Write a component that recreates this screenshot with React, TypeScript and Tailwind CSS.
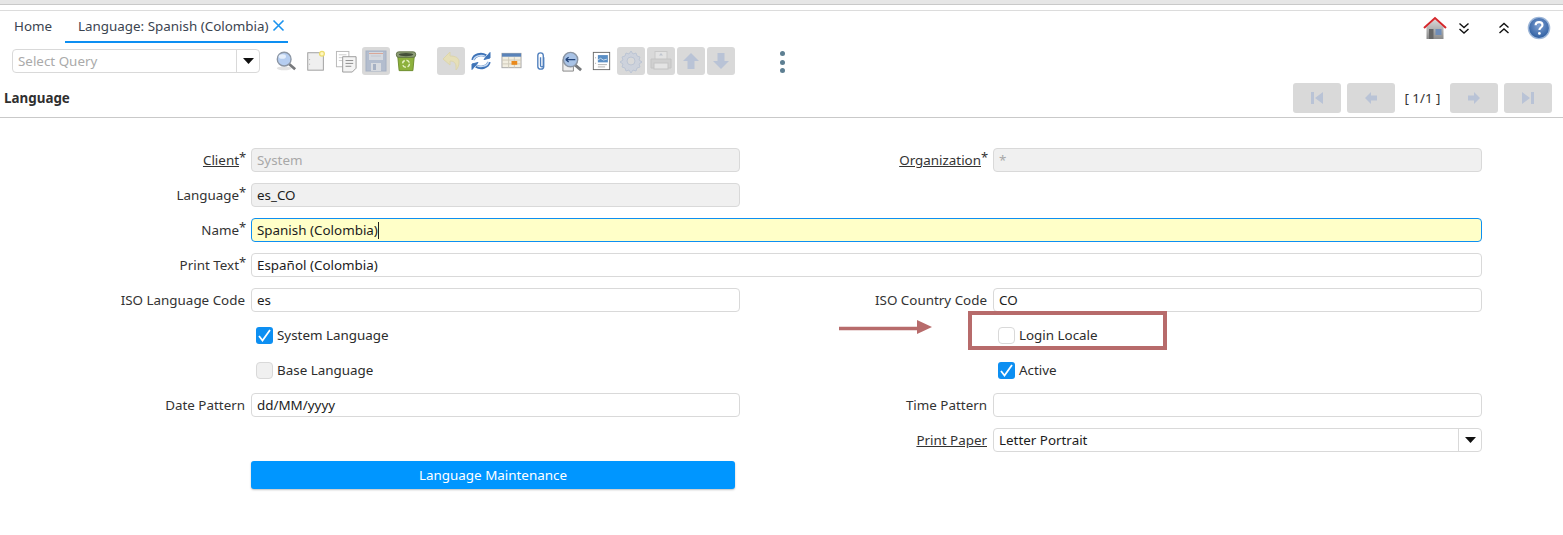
import React from 'react';

const font = 'font-["Noto_Sans",sans-serif]';
const labelCls = 'pt-[2px] text-[13.4px] text-[#333] text-right self-center leading-none whitespace-nowrap';
const fieldCls = 'h-6 border rounded-[4px] px-[5px] flex items-center text-[13.4px]';
const inputCls = `${fieldCls} border-[#d9d9d9] text-[#1c1c1c]`;

function Label({ text, req, link }: { text: string; req?: boolean; link?: boolean }) {
  return (
    <div className={labelCls}>
      <span className={link ? 'underline' : ''}>{text}</span>
      {req && <span className="relative inline-block w-[6px] h-[1px]"><span className="absolute left-0 -top-[13px] text-[13px]">*</span></span>}
    </div>
  );
}

function Check({ checked, disabled }: { checked?: boolean; disabled?: boolean }) {
  if (checked) {
    return (
      <span className="w-[17px] h-[17px] rounded-[3px] bg-[#0d8ff2] flex items-center justify-center">
        <svg width="15" height="15" viewBox="0 0 15 15" fill="none" stroke="#fff" strokeWidth="1.8"><path d="M2 8l3.5 4.5L13 2" /></svg>
      </span>
    );
  }
  return <span className={`w-[17px] h-[17px] rounded-[4px] border border-[#d9d9d9] ${disabled ? 'bg-[#f0f0f0]' : 'bg-white'}`} />;
}

function CheckRow({ text, checked, disabled }: { text: string; checked?: boolean; disabled?: boolean }) {
  return (
    <div className="flex items-center gap-[4px] pl-[5px] h-6 text-[13.4px] text-[#2c2c2c]">
      <Check checked={checked} disabled={disabled} />
      <span>{text}</span>
    </div>
  );
}

function Tool({ off, children }: { off?: boolean; children: React.ReactNode }) {
  return (
    <div className={`w-7 h-7 rounded-[3px] flex items-center justify-center ${off ? 'bg-[#d9d9d9]' : ''}`}>
      {children}
    </div>
  );
}

function Nav({ children }: { children: React.ReactNode }) {
  return <div className="w-12 h-[30px] rounded-[3px] bg-[#d9d9d9] flex items-center justify-center">{children}</div>;
}

const navIcon = '#b9c3d6';

export default function App() {
  return (
    <div className={`relative w-[1563px] h-[535px] overflow-hidden bg-white ${font}`}>
      <div className="h-[5px] bg-[#e6e6e6] border-b border-[#c9c9c9]" />
      <div className="mt-[5px] border-t border-[#dcdcdc]" />

      {/* tabs */}
      <div className="flex items-start h-[32px]">
        <div className="w-[65px] pl-[14px] pt-[5px] text-[13.4px] leading-5 text-[#3b4450]">Home</div>
        <div className="w-[223px] h-[32px] border-b-2 border-[#0d8ff2] pl-[13px] pt-[5px] text-[13.4px] leading-5 text-[#3b4450] flex gap-[3px] whitespace-nowrap">
          <span>Language: Spanish (Colombia)</span>
          <svg className="mt-[3px] shrink-0" width="13" height="13" viewBox="0 0 13 13" stroke="#1b93ee" strokeWidth="1.6"><path d="M1.5 1.5l10 10M11.5 1.5l-10 10" /></svg>
        </div>
        <div className="ml-auto flex items-center pt-[5px] pr-[12px]">
          <svg width="24" height="24" viewBox="0 0 24 24">
            <defs>
              <linearGradient id="houseBody" x1="0" y1="0" x2="0" y2="1"><stop offset="0" stopColor="#d8d8d8" /><stop offset="1" stopColor="#8a8a8a" /></linearGradient>
            </defs>
            <path d="M3.5 11v12h17V11L12 3.5z" fill="url(#houseBody)" />
            <path d="M1 12L12 2l11 10" fill="none" stroke="#d5282c" strokeWidth="2" />
            <rect x="6" y="13" width="4.5" height="10" fill="#666" />
            <rect x="12.5" y="13" width="6" height="6" fill="#6f8db8" />
          </svg>
          <svg className="ml-[10px]" width="14" height="14" viewBox="0 0 14 14" fill="none" stroke="#111" strokeWidth="1.4"><path d="M2.5 2.5L7 6.5l4.5-4M2.5 8L7 12l4.5-4" /></svg>
          <svg className="ml-[26px]" width="14" height="14" viewBox="0 0 14 14" fill="none" stroke="#111" strokeWidth="1.4"><path d="M2.5 6.5L7 2.5l4.5 4M2.5 12L7 8l4.5 4" /></svg>
          <svg className="ml-[16px]" width="24" height="24" viewBox="0 0 24 24">
            <defs>
              <radialGradient id="helpBall" cx="0.5" cy="0.4" r="0.6"><stop offset="0" stopColor="#7ea0d2" /><stop offset="1" stopColor="#2c5c9f" /></radialGradient>
            </defs>
            <circle cx="12" cy="12" r="10.6" fill="url(#helpBall)" stroke="#9db6d8" strokeWidth="1.4" />
            <path d="M8.6 9.3c0-2 1.5-3.2 3.5-3.2s3.4 1.2 3.4 2.9c0 2.5-3.1 2.6-3.1 5" fill="none" stroke="#fff" strokeWidth="2.1" />
            <circle cx="12.4" cy="17.4" r="1.4" fill="#fff" />
          </svg>
        </div>
      </div>

      {/* toolbar */}
      <div className="flex items-center h-[36px] pl-3">
        <div className="w-[248px] h-6 border border-[#d9d9d9] rounded-[4px] flex items-center text-[13.4px] text-[#aaa]">
          <span className="flex-1 pl-[5px]">Select Query</span>
          <span className="w-[23px] h-full border-l border-[#d9d9d9] flex items-center justify-center">
            <svg width="11" height="6" viewBox="0 0 11 6"><path d="M0 0h11L5.5 6z" fill="#111" /></svg>
          </span>
        </div>
        <div className="flex items-center gap-[2px] ml-[12px]">
          <Tool>
            <svg width="22" height="22" viewBox="0 0 24 24"><ellipse cx="10" cy="20" rx="8" ry="2" fill="#e3e3e3" /><path d="M15 15l7 6" stroke="#77797c" strokeWidth="3" /><circle cx="10" cy="10" r="7.5" fill="#b5cdf0" stroke="#8b95a3" strokeWidth="1.5" /><ellipse cx="8" cy="7" rx="4" ry="2.5" fill="#e4eefb" /></svg>
          </Tool>
          <Tool>
            <svg width="22" height="22" viewBox="0 0 22 24"><rect x="2" y="3" width="17" height="19" fill="#efefef" stroke="#999" /><path d="M4 10v1M4 15v1" stroke="#aaa" /><circle cx="17.5" cy="4" r="2.6" fill="#fff7c0" stroke="#ecdc6f" strokeWidth="1.4" /></svg>
          </Tool>
          <Tool>
            <svg width="23" height="23" viewBox="0 0 24 24"><rect x="1.5" y="1.5" width="13" height="16" fill="#fff" stroke="#b8b8b8" /><path d="M4 5h8M4 8h4M4 11h4" stroke="#ccc" /><path d="M8 7h14v12l-4 4H8z" fill="#f4f4f4" stroke="#999" /><path d="M11 11h8M11 14h8M11 17h6" stroke="#8c8c8c" /></svg>
          </Tool>
          <Tool off>
            <svg width="22" height="22" viewBox="0 0 22 22"><rect x="1" y="1" width="20" height="20" fill="#b3bdce" stroke="#a6b1c4" /><rect x="4" y="2" width="14" height="8" fill="#d5d9df" /><path d="M4 3.5h14" stroke="#d9a798" /><path d="M6 6h10" stroke="#c3c8d1" /><rect x="6" y="13" width="10" height="8" fill="#d8dbe0" /><rect x="8" y="14" width="3" height="6" fill="#a6b1c4" /></svg>
          </Tool>
          <Tool>
            <svg width="22" height="24" viewBox="0 0 24 24"><path d="M3 7h18l-1.5 15.5h-15z" fill="#8db13c" stroke="#6b8a2b" /><rect x="1.5" y="2" width="21" height="6" rx="2.5" fill="#8c9c76" stroke="#5e7044" /><ellipse cx="12" cy="5" rx="8" ry="1.7" fill="#44503a" /><circle cx="12" cy="15" r="3.8" fill="none" stroke="#e7f2c6" strokeWidth="1.6" strokeDasharray="4 2" /></svg>
          </Tool>
        </div>
        <div className="flex items-center gap-[2px] ml-[17px]">
          <Tool off>
            <svg width="20" height="22" viewBox="0 0 20 22"><path d="M9 2L2 9l7 6v-4c4 0 6 2 6 6v3c2-2 3-5 3-8 0-4-3-6-9-6z" fill="#e6dfb8" stroke="#dcd5ad" /></svg>
          </Tool>
          <Tool>
            <svg width="22" height="22" viewBox="0 0 22 22" fill="none">
              <path d="M3 10c1-5 8-7 13-4M19 12c-1 5-8 7-13 4" stroke="#3f74b8" strokeWidth="3.4" />
              <path d="M14 9.5l6-1.5V2.5zM8 12.5l-6 1.5v5.5z" fill="#3f74b8" stroke="#3f74b8" />
              <path d="M3.5 10c1-4 7.5-6 12-3.5M18.5 12c-1 4-7.5 6-12 3.5" stroke="#c9dcf3" strokeWidth="1.4" />
            </svg>
          </Tool>
          <Tool>
            <svg width="21" height="20" viewBox="0 0 22 20"><rect x="1" y="2" width="20" height="15" fill="#f2eee0" stroke="#a8a8a8" /><rect x="1" y="2" width="20" height="3.5" fill="#5a83b9" /><path d="M1 9h20M1 13h20M8 6v11M14 6v11" stroke="#cfcaba" /><rect x="11" y="10" width="6" height="4" fill="#ea8a1c" /></svg>
          </Tool>
          <Tool>
            <svg width="12" height="20" viewBox="0 0 12 22" fill="none" stroke="#4f7fbd" strokeWidth="1.5"><path d="M9 7v10c0 4-6.5 4-6.5 0V5c0-4 6-4 6 0v11c0 2-3 2-3 0V7" /></svg>
          </Tool>
          <Tool>
            <svg width="23" height="23" viewBox="0 0 24 24"><path d="M3 10v12h11V10z" fill="#eee" stroke="#888" /><path d="M15 15l7 6" stroke="#77797c" strokeWidth="3" /><circle cx="11" cy="10" r="7.5" fill="#a9c3e6" stroke="#8b95a3" strokeWidth="1.5" /><path d="M6 10h10M6 10l3-2.5M6 10l3 2.5" stroke="#22447a" strokeWidth="1.3" fill="none" /></svg>
          </Tool>
          <Tool>
            <svg width="19" height="20" viewBox="0 0 20 22"><rect x="1" y="1.5" width="18" height="19" fill="#fff" stroke="#666" /><rect x="6" y="4.5" width="11" height="8" fill="#5b8fc5" /><path d="M6 10l3-2 3 2 4-1" stroke="#cfe0f0" fill="none" /><path d="M6 15h10M6 17.500h8" stroke="#aaa" /><path d="M3.500 7v1M3.500 13v1" stroke="#999" /></svg>
          </Tool>
          <Tool off>
            <svg width="24" height="24" viewBox="0 0 24 24"><path d="M12 2l2 3 3-1 1 3 3 1-1 3 3 2-3 2 1 3-3 1-1 3-3-1-2 3-2-3-3 1-1-3-3-1 1-3-3-2 3-2-1-3 3-1 1-3 3 1z" fill="#cdd2dc" stroke="#bcc5d4" /><circle cx="12" cy="12" r="4" fill="#d9d9d9" stroke="#bcc5d4" /></svg>
          </Tool>
          <Tool off>
            <svg width="24" height="22" viewBox="0 0 24 22"><rect x="6" y="1.5" width="12" height="8" fill="#e3e3e3" stroke="#c9c9c9" /><path d="M12 3l-2 2.5h4z" fill="#bfc5cf" /><path d="M2 9h20v9H2z" fill="#d0d0d0" stroke="#c4c4c4" /><rect x="5" y="13" width="14" height="6" fill="#e4e4e4" stroke="#c4c4c4" /></svg>
          </Tool>
          <Tool off>
            <svg width="18" height="18" viewBox="0 0 18 18"><path d="M9 1L1 9h4.5v8h7V9H17z" fill={navIcon} /></svg>
          </Tool>
          <Tool off>
            <svg width="18" height="18" viewBox="0 0 18 18"><path d="M9 17L1 9h4.5V1h7v8H17z" fill={navIcon} /></svg>
          </Tool>
        </div>
        <div className="ml-[45px] flex flex-col gap-[3.5px] mt-[2px]">
          <span className="w-[5px] h-[5px] rounded-full bg-[#5d7f92]" />
          <span className="w-[5px] h-[5px] rounded-full bg-[#5d7f92]" />
          <span className="w-[5px] h-[5px] rounded-full bg-[#5d7f92]" />
        </div>
      </div>

      {/* title bar */}
      <div className="flex items-start h-[39px] border-b border-[#c9c9c9] pt-[4px] pl-1 pr-[11px]">
        <span className="text-[13.4px] leading-[30px] font-bold text-[#2f2f2f]">Language</span>
        <div className="ml-auto flex items-center gap-[6px]">
          <Nav><svg width="14" height="14" viewBox="0 0 14 14" fill={navIcon}><path d="M1 1h3v12H1zM13 1v12L5 7z" /></svg></Nav>
          <Nav><svg width="14" height="14" viewBox="0 0 14 14" fill={navIcon}><path d="M1 7l6-6v3.5h6v5H7V13z" /></svg></Nav>
          <span className="w-[43px] text-center text-[13.4px] text-[#333] whitespace-nowrap">[ 1/1 ]</span>
          <Nav><svg width="14" height="14" viewBox="0 0 14 14" fill={navIcon}><path d="M13 7L7 1v3.5H1v5h6V13z" /></svg></Nav>
          <Nav><svg width="14" height="14" viewBox="0 0 14 14" fill={navIcon}><path d="M13 1h-3v12h3zM1 1v12l8-6z" /></svg></Nav>
        </div>
      </div>

      {/* form */}
      <div className="grid grid-cols-[245px_489px_241px_489px] gap-x-[6px] gap-y-[11px] mt-[30px]">
        <Label text="Client" req link />
        <div className={`${inputCls} bg-[#f0f0f0] !text-[#a8a8a8]`}>System</div>
        <Label text="Organization" req link />
        <div className={`${inputCls} bg-[#f0f0f0] !text-[#a8a8a8]`}>*</div>

        <Label text="Language" req />
        <div className={`${inputCls} bg-[#f0f0f0]`}>es_CO</div>
        <div className="col-span-2" />

        <Label text="Name" req />
        <div className={`${fieldCls} col-span-3 bg-[#ffffc8] border-[#0d8ff2] text-[#1c1c1c]`}>
          Spanish (Colombia)<span className="w-px h-[17px] bg-[#222]" />
        </div>

        <Label text="Print Text" req />
        <div className={`${inputCls} col-span-3`}>Español (Colombia)</div>

        <Label text="ISO Language Code" />
        <div className={inputCls}>es</div>
        <Label text="ISO Country Code" />
        <div className={inputCls}>CO</div>

        <div />
        <CheckRow text="System Language" checked />
        <div />
        <CheckRow text="Login Locale" />

        <div />
        <CheckRow text="Base Language" disabled />
        <div />
        <CheckRow text="Active" checked />

        <Label text="Date Pattern" />
        <div className={inputCls}>dd/MM/yyyy</div>
        <Label text="Time Pattern" />
        <div className={inputCls} />

        <div className="col-span-2" />
        <Label text="Print Paper" link />
        <div className={`${inputCls} pr-0`}>
          <span className="flex-1">Letter Portrait</span>
          <span className="w-[23px] h-full border-l border-[#d9d9d9] flex items-center justify-center">
            <svg width="11" height="6" viewBox="0 0 11 6"><path d="M0 0h11L5.5 6z" fill="#111" /></svg>
          </span>
        </div>

        <div />
        <button className="w-[484px] h-7 -mt-[2px] rounded-[3px] bg-[#0096ff] text-white text-[13.4px] shadow-[0_1px_2px_rgba(0,0,0,0.25)]">Language Maintenance</button>
      </div>

      {/* annotation drawn over the form */}
      <div className="absolute left-[968px] top-[311px] w-[199px] h-[39px] border-[4px] border-[#b76b6b]" />
      <svg className="absolute left-[838px] top-[319px]" width="96" height="16" viewBox="0 0 96 16">
        <path d="M1 9.5h79" stroke="#b76b6b" strokeWidth="3.5" />
        <path d="M79 1l15 7-15 7z" fill="#b76b6b" />
      </svg>
    </div>
  );
}
